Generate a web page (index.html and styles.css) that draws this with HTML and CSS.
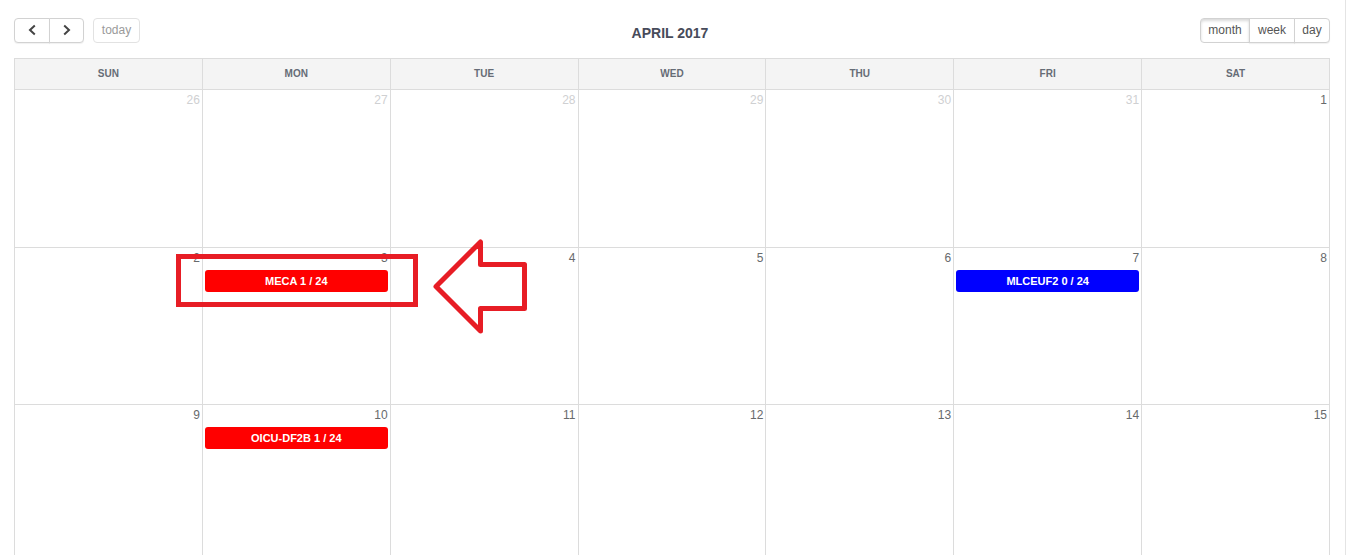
FILE: index.html
```html
<!DOCTYPE html>
<html lang="en">
<head>
<meta charset="utf-8">
<title>April 2017</title>
<link rel="stylesheet" href="styles.css">
</head>
<body>
<main class="panel">
  <header class="toolbar">
    <div class="toolbar-side">
      <div class="group">
        <button class="btn btn-icon" type="button" aria-label="Previous"><svg width="8" height="12" viewBox="0 0 8 12"><path d="M6.800 1.600 2 6l4.800 4.400"/></svg></button>
        <button class="btn btn-icon" type="button" aria-label="Next"><svg width="8" height="12" viewBox="0 0 8 12"><path d="M1.200 1.600 6 6l-4.800 4.400"/></svg></button>
      </div>
      <button class="btn btn-today" type="button" disabled>today</button>
    </div>
    <h2 class="title">APRIL 2017</h2>
    <div class="group">
      <button class="btn btn-month active" type="button">month</button>
      <button class="btn btn-week" type="button">week</button>
      <button class="btn btn-day" type="button">day</button>
    </div>
  </header>
  <div class="calendar">
    <table class="month">
      <thead>
        <tr><th>SUN</th><th>MON</th><th>TUE</th><th>WED</th><th>THU</th><th>FRI</th><th>SAT</th></tr>
      </thead>
      <tbody>
        <tr class="first-week">
          <td class="other"><div class="date">26</div></td>
          <td class="other"><div class="date">27</div></td>
          <td class="other"><div class="date">28</div></td>
          <td class="other"><div class="date">29</div></td>
          <td class="other"><div class="date">30</div></td>
          <td class="other"><div class="date">31</div></td>
          <td><div class="date">1</div></td>
        </tr>
        <tr>
          <td><div class="date">2</div></td>
          <td><div class="date">3</div><a class="event red" href="#">MECA 1 / 24</a></td>
          <td><div class="date">4</div></td>
          <td><div class="date">5</div></td>
          <td><div class="date">6</div></td>
          <td><div class="date">7</div><a class="event blue" href="#">MLCEUF2 0 / 24</a></td>
          <td><div class="date">8</div></td>
        </tr>
        <tr>
          <td><div class="date">9</div></td>
          <td><div class="date">10</div><a class="event red" href="#">OICU-DF2B 1 / 24</a></td>
          <td><div class="date">11</div></td>
          <td><div class="date">12</div></td>
          <td><div class="date">13</div></td>
          <td><div class="date">14</div></td>
          <td><div class="date">15</div></td>
        </tr>
      </tbody>
    </table>
    <svg class="callout" width="356" height="96" viewBox="0 0 356 96" aria-hidden="true">
      <path d="M4.500 18.500h237v48h-237z"/>
      <path stroke-linejoin="round" d="M262 48.500 306.500 4v22.500h44v44h-44V93z"/>
    </svg>
  </div>
</main>
</body>
</html>
```
FILE: styles.css
```css
* { box-sizing: border-box; }

body {
  margin: 0;
  background: #fff;
  color: #676a6c;
  font-family: "Liberation Sans", Arial, sans-serif;
  font-size: 13px;
}

.panel {
  height: 100vh;
  overflow: hidden;
  padding: 18px 15px 0 14px;
  border-right: 1px solid #e4e4e4;
}

.toolbar {
  display: flex;
  justify-content: space-between;
  align-items: flex-start;
  margin-bottom: 15px;
}

.toolbar-side { display: flex; gap: 9px; }

.group { display: flex; }

.btn {
  display: flex;
  align-items: center;
  justify-content: center;
  height: 25px;
  margin: 0;
  padding: 0 0 2px;
  border: 1px solid #d2d2d2;
  border-radius: 4px;
  background: #fff;
  color: #555;
  font: inherit;
  font-size: 12px;
  box-shadow: 0 1px 1px rgba(0, 0, 0, 0.06);
}

.group .btn + .btn { margin-left: -1px; }
.group .btn:not(:first-child) { border-top-left-radius: 0; border-bottom-left-radius: 0; }
.group .btn:not(:last-child) { border-top-right-radius: 0; border-bottom-right-radius: 0; }

.btn-icon { width: 36px; padding-bottom: 1px; }
.btn-icon + .btn-icon { width: 35px; }
.btn-icon path { fill: none; stroke: #444; stroke-width: 2; }

.btn-today { width: 47px; color: #9a9a9a; border-color: #e2e2e2; box-shadow: none; }
.btn-month { width: 50px; }
.btn-week { width: 46px; }
.btn-day { width: 36px; }

.btn.active { box-shadow: inset 0 2px 3px rgba(0, 0, 0, 0.15); }

.title {
  margin: 7px 0 0;
  color: #474b5a;
  font-size: 14px;
  line-height: 16px;
}

.calendar { position: relative; }

.month {
  width: 100%;
  table-layout: fixed;
  border-collapse: collapse;
}

.month th,
.month td {
  border: 1px solid #dcdcdc;
  padding: 0;
}

.month th {
  height: 31px;
  padding-bottom: 2px;
  background: #f4f4f4;
  color: #666c76;
  font-size: 10px;
}

.month td {
  height: 157px;
  vertical-align: top;
}

.month .first-week td { height: 158px; }

.date {
  padding: 2px 2px 0 0;
  line-height: 16px;
  font-size: 12px;
  text-align: right;
}

.other .date { color: #cfd0d2; }

.event {
  display: block;
  margin: 4px 2px 0;
  border-radius: 3px;
  color: #fff;
  font-size: 11px;
  font-weight: bold;
  line-height: 22px;
  text-align: center;
  text-decoration: none;
}

.red { background: #f00; }
.blue { background: #00f; }

.callout {
  position: absolute;
  left: 160px;
  top: 180px;
  fill: none;
  stroke: #e71d25;
  stroke-width: 5;
}
```
